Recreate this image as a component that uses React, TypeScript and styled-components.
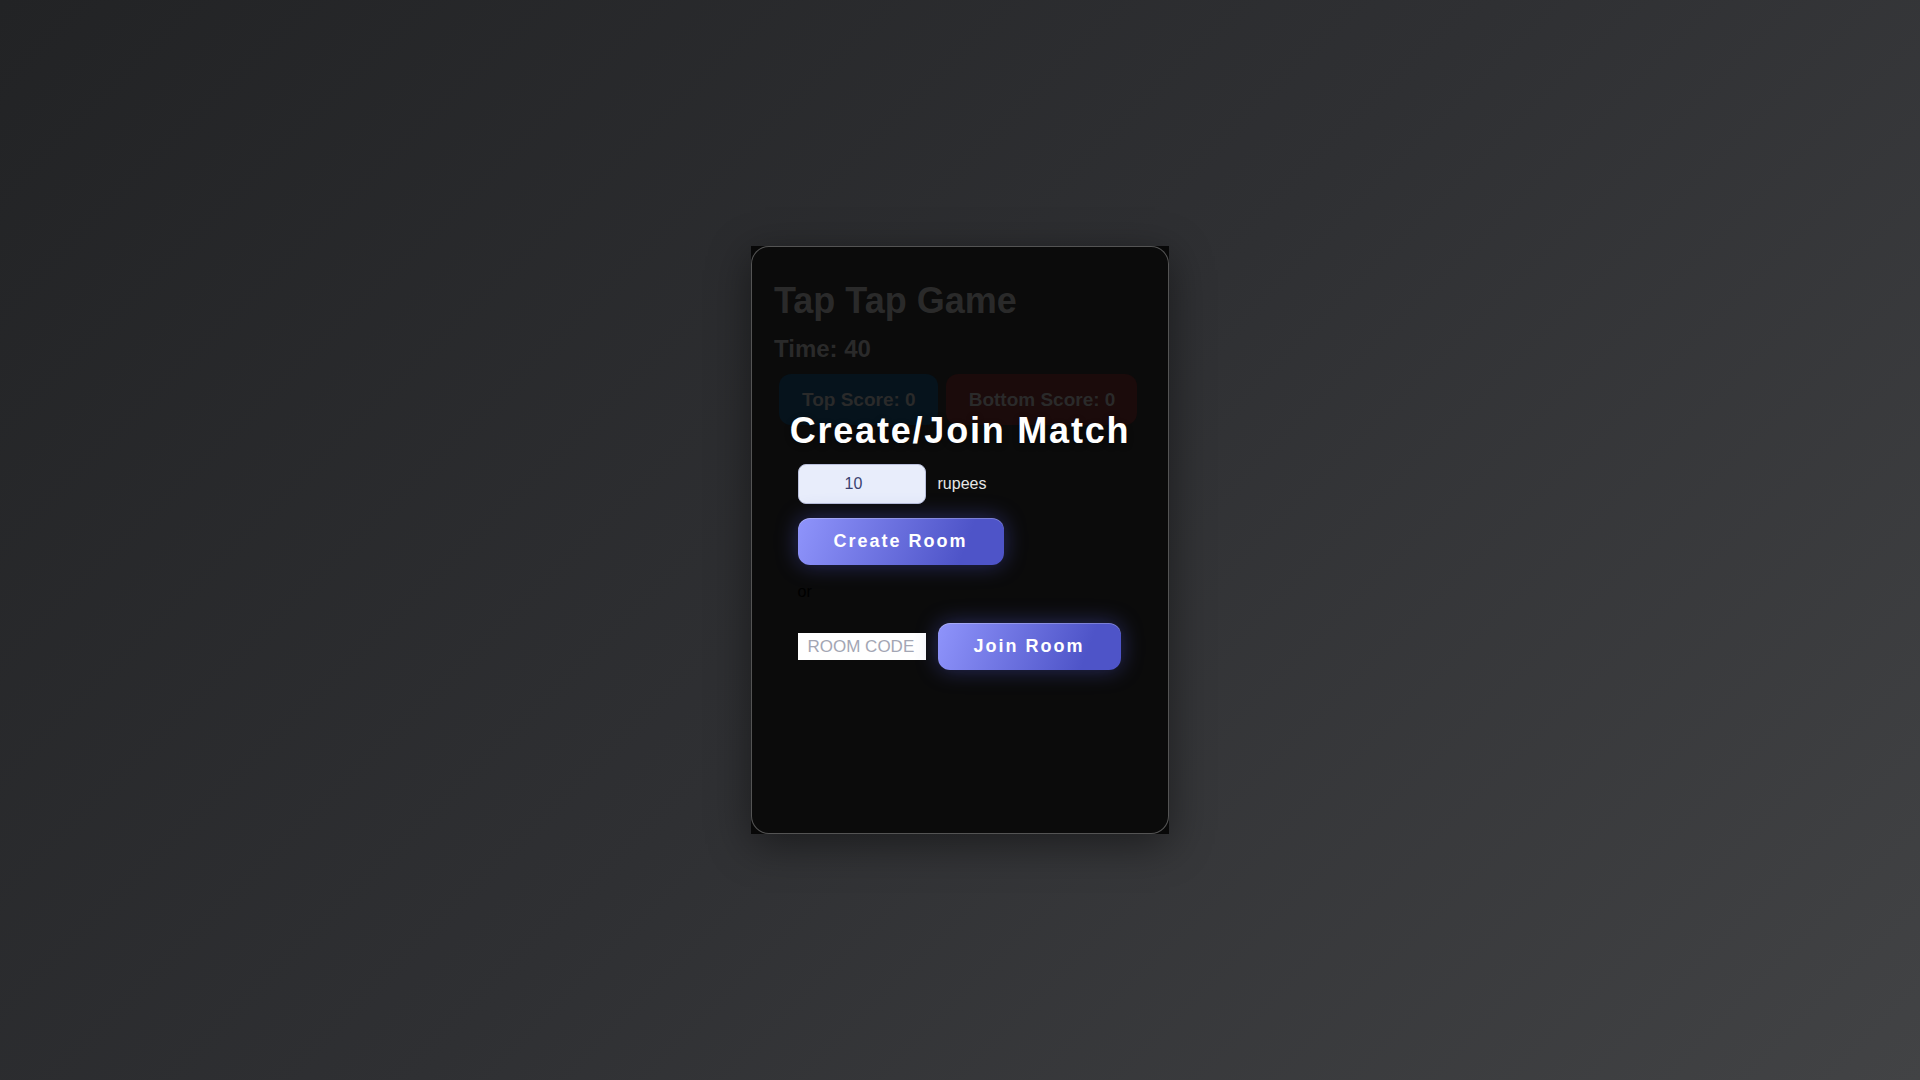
import styled, { createGlobalStyle } from "styled-components";

const GlobalStyle = createGlobalStyle`
  html, body, #root {
    height: 100%;
  }
  body {
    margin: 0;
    font-family: "Liberation Sans", Arial, sans-serif;
    background: linear-gradient(135deg, #222325 0%, #2f3033 50%, #424345 100%);
  }
  * {
    box-sizing: border-box;
  }
`;

const Page = styled.div`
  height: 100%;
  display: flex;
  align-items: center;
  justify-content: center;
`;

// the square black layer that sits behind the rounded game card
const Stage = styled.div`
  position: relative;
  width: 418px;
  height: 588px;
  background: #080808;
  box-shadow: 0 10px 40px rgba(0, 0, 0, 0.45);
`;

const GameCard = styled.div`
  height: 100%;
  padding: 20px 20px 20px 22px;
  border: 1px solid rgba(255, 255, 255, 0.3);
  border-radius: 18px;
  background: #0b0b0b;
`;

const GameTitle = styled.h1`
  margin: 13px 0 0;
  font-size: 36px;
  font-weight: bold;
  color: #2a2a2a;
`;

const Timer = styled.h2`
  margin: 13px 0 0;
  font-size: 24px;
  font-weight: bold;
  color: #2a2a2a;
`;

const Scores = styled.div`
  display: flex;
  gap: 8px;
  width: 357px;
  margin: 11px 0 0 5px;
`;

const ScoreBox = styled.div<{ $side: "top" | "bottom" }>`
  padding: 15px 22px 15px 23px;
  border-radius: 12px;
  font-size: 19px;
  line-height: 21px;
  font-weight: bold;
  white-space: nowrap;
  color: #2a2a2a;
  background: ${(p) => (p.$side === "top" ? "#06131c" : "#1b0b0b")};
`;

const Overlay = styled.div`
  position: absolute;
  inset: 0;
  display: flex;
  flex-direction: column;
  align-items: center;
  justify-content: center;
`;

const MatchTitle = styled.h2`
  margin: 0 0 12px;
  font-size: 36px;
  font-weight: bold;
  letter-spacing: 1.8px;
  color: #fff;
  text-shadow: 0 2px 6px rgba(0, 0, 0, 0.4);
`;

const Form = styled.div`
  display: flex;
  flex-direction: column;
  align-items: flex-start;
  margin-right: 2px;
`;

const Row = styled.div`
  display: flex;
  align-items: center;
  gap: 12px;
`;

const AmountInput = styled.input`
  width: 128px;
  height: 40px;
  padding: 0 24px 0 8px;
  border: 1px solid #b9bfda;
  border-radius: 8px;
  background: #e8edfb;
  color: #3b4270;
  font-family: inherit;
  font-size: 16px;
  text-align: center;
  outline: none;
`;

const Unit = styled.span`
  font-size: 16px;
  color: #e6e6e6;
`;

const GlowButton = styled.button<{ $top?: number }>`
  margin-top: ${(p) => p.$top ?? 0}px;
  padding: 14px 36px;
  border: none;
  border-radius: 12px;
  background: linear-gradient(110deg, #8f94fb 0%, #4e54c8 80%);
  color: #fff;
  font-family: inherit;
  font-size: 18px;
  line-height: 19px;
  font-weight: bold;
  letter-spacing: 2px;
  cursor: pointer;
  box-shadow: 0 0 22px rgba(78, 84, 200, 0.45),
    inset 0 1px 0 rgba(255, 255, 255, 0.25);
`;

const Or = styled.p`
  margin: 18px 0 22px;
  font-size: 16px;
  line-height: 18px;
  color: #000;
`;

const CodeInput = styled.input`
  width: 128px;
  height: 27px;
  padding: 0 10px;
  border: none;
  background: #fff;
  font-family: inherit;
  font-size: 17px;
  outline: none;
  &::placeholder {
    color: #a3a6b4;
  }
`;

const App = () => {
  return (
    <Page>
      <GlobalStyle />
      <Stage>
        <GameCard>
          <GameTitle>Tap Tap Game</GameTitle>
          <Timer>Time: 40</Timer>
          <Scores>
            <ScoreBox $side="top">Top Score: 0</ScoreBox>
            <ScoreBox $side="bottom">Bottom Score: 0</ScoreBox>
          </Scores>
        </GameCard>
        <Overlay>
          <MatchTitle>Create/Join Match</MatchTitle>
          <Form>
            <Row>
              <AmountInput type="text" defaultValue="10" />
              <Unit>rupees</Unit>
            </Row>
            <GlowButton $top={14}>Create Room</GlowButton>
            <Or>or</Or>
            <Row>
              <CodeInput placeholder="ROOM CODE" />
              <GlowButton>Join Room</GlowButton>
            </Row>
          </Form>
        </Overlay>
      </Stage>
    </Page>
  );
};

export default App;
